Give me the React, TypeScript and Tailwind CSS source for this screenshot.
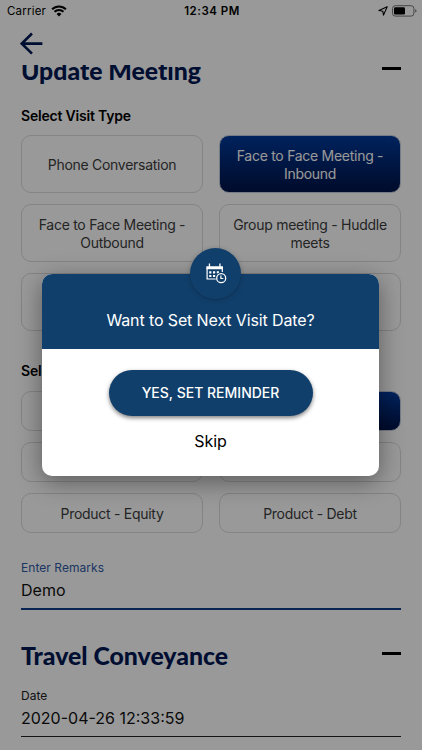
import { ReactNode } from 'react';

interface OptionProps {
    label: string;
    selected?: boolean;
}

interface FieldProps {
    label: string;
    value: string;
    focused?: boolean;
}

const visitTypes: OptionProps[] = [
    { label: 'Phone Conversation' },
    { label: 'Face to Face Meeting - Inbound', selected: true },
    { label: 'Face to Face Meeting - Outbound' },
    { label: 'Group meeting - Huddle meets' },
    { label: 'Joint Visit with Branch Manager' },
    { label: 'Others' },
];

const purposes: OptionProps[] = [
    { label: 'Service' },
    { label: 'Review', selected: true },
    { label: 'Training' },
    { label: 'Product - MF' },
    { label: 'Product - Equity' },
    { label: 'Product - Debt' },
];

function StatusBar() {
    return (
        <div className="grid h-[22px] shrink-0 grid-cols-3 items-center pr-[5px] pl-[7px] text-[11.5px]">
            <div className="flex items-center gap-[5px] pt-px tracking-[0.2px]">
                Carrier
                <svg
                    className="mb-[2px]"
                    width="16"
                    height="12"
                    viewBox="0 0 16 12"
                >
                    <path d="M8 11.4 5.6 8.9a3.4 3.4 0 0 1 4.8 0Z" />
                    <path
                        d="M3.5 6.8a6.4 6.4 0 0 1 9 0M1.1 4.3a9.8 9.8 0 0 1 13.8 0"
                        fill="none"
                        stroke="#000"
                        strokeWidth="2"
                    />
                </svg>
            </div>
            <div className="pt-px text-center font-semibold tracking-[0.5px]">
                12:34 PM
            </div>
            <div className="flex items-center justify-end gap-[4px]">
                <svg width="10" height="10" viewBox="0 0 10 10">
                    <path
                        d="M9.2.8.9 4.5l3.9.7.7 3.9Z"
                        fill="none"
                        stroke="#000"
                        strokeWidth="1.1"
                        strokeLinejoin="round"
                    />
                </svg>
                <svg width="25" height="12" viewBox="0 0 25 12">
                    <rect
                        x=".5"
                        y=".7"
                        width="21.4"
                        height="10.4"
                        rx="2.8"
                        fill="none"
                        stroke="#777"
                    />
                    <rect x="2" y="2.2" width="11" height="7.4" rx="1.4" />
                    <path d="M23.2 4.2v3.4q1.3-.4 1.3-1.7t-1.3-1.7Z" fill="#777" />
                </svg>
            </div>
        </div>
    );
}

function SectionTitle({ children }: { children: ReactNode }) {
    return (
        <div className="flex h-8 items-center justify-between">
            <h2 className="mb-[2px] font-[Lato,sans-serif] text-[24.8px] leading-8 font-black text-[#001854] [font-variant-ligatures:none]">
                {children}
            </h2>
            <span className="mb-[7px] h-[2.5px] w-[19px] bg-black" />
        </div>
    );
}

function Option({ label, selected }: OptionProps) {
    return (
        <button
            className={`flex items-center justify-center rounded-[10px] border px-2 pt-[2px] text-center text-[14px] leading-[18px] tracking-[-0.28px] ${
                selected
                    ? 'border-[#c4cbdc] bg-linear-to-b from-[#003a9c] to-[#001348] text-white'
                    : 'border-[#dcdcdc] text-[#3c3c3c]'
            }`}
        >
            {label}
        </button>
    );
}

function Field({ label, value, focused }: FieldProps) {
    return (
        <div
            className={
                focused
                    ? 'border-b-2 border-[#0f3f8c]'
                    : 'border-b border-[#222]'
            }
        >
            <div
                className={`pt-px text-[12px] leading-4 tracking-[0.05px] ${focused ? 'text-[#2f5ba5]' : 'text-[#222]'}`}
            >
                {label}
            </div>
            <div className="pt-[3px] pb-[7px] text-[16px] leading-[22px] text-[#111]">
                {value}
            </div>
        </div>
    );
}

function ReminderIcon() {
    return (
        <svg width="22" height="22" viewBox="0 0 22 22" fill="#fff">
            <path
                d="M10.8 16H2.1V4h15.2v5"
                fill="none"
                stroke="#fff"
                strokeWidth="1.2"
            />
            <path d="M1.5 3.4h16.4v2.9H1.5ZM3.8.6h1.3v4H3.8ZM14.3.6h1.3v4h-1.3ZM4.2 8.2h2.2v2.2H4.2ZM8 8.2h2.2v2.2H8ZM11.8 8.2H14v1.5l-2.2.7ZM4.2 11.9h2.2v2.2H4.2ZM8 11.9h2.2v2.2H8Z" />
            <circle
                cx="16.2"
                cy="15.2"
                r="4.5"
                fill="#113f6b"
                stroke="#fff"
                strokeWidth="1.3"
            />
            <path
                d="M15.9 12.6v2.9h2.4"
                fill="none"
                stroke="#fff"
                strokeWidth="1.2"
            />
        </svg>
    );
}

function ReminderDialog() {
    return (
        <div className="absolute inset-0 flex items-center justify-center bg-black/40 pr-px">
            <div className="relative h-[202px] w-[337px] rounded-[10px] bg-white shadow-[0_6px_24px_rgba(0,0,0,0.4)]">
                <div className="flex h-[75px] items-center justify-center rounded-t-[10px] bg-[#113f6b] pt-[16px] text-[16px] tracking-[-0.12px] text-white">
                    Want to Set Next Visit Date?
                </div>
                <div className="absolute -top-[26px] left-[148px] flex size-[51px] items-center justify-center rounded-full bg-[#113f6b] shadow-[0_1px_5px_rgba(0,0,0,0.25)]">
                    <ReminderIcon />
                </div>
                <div className="flex flex-col items-center pt-[21px]">
                    <button className="h-[46px] w-[204px] rounded-full bg-[#113f6b] pb-[2px] text-[14px] font-medium text-white shadow-[0_2px_4px_rgba(0,0,0,0.5)]">
                        YES, SET REMINDER
                    </button>
                    <button className="mt-[13px] text-[16px] leading-6 text-black">
                        Skip
                    </button>
                </div>
            </div>
        </div>
    );
}

export default function App() {
    return (
        <div className="relative flex h-[750px] w-[422px] flex-col overflow-hidden bg-white font-[Inter,sans-serif] text-black">
            <StatusBar />
            <div className="flex h-[43px] shrink-0 items-center pl-[20px]">
                <svg
                    width="23"
                    height="24"
                    viewBox="0 0 23 24"
                    fill="none"
                    stroke="#001854"
                    strokeWidth="2.6"
                >
                    <path d="M12 1.5 1.8 11.6 12 21.7M1.8 11.6h20.6" />
                </svg>
            </div>
            <div className="min-h-0 flex-1 overflow-hidden px-[21px]">
                <div className="-mt-[9px]">
                    <SectionTitle>Update Meeting</SectionTitle>
                </div>
                <h3 className="mt-[18px] text-[14px] leading-5 font-semibold tracking-[-0.2px]">
                    Select Visit Type
                </h3>
                <div className="mt-[9px] grid auto-rows-[58px] grid-cols-2 gap-x-[16px] gap-y-[11px]">
                    {visitTypes.map((item) => (
                        <Option key={item.label} {...item} />
                    ))}
                </div>
                <h3 className="mt-[30px] text-[14px] leading-5 font-semibold tracking-[-0.2px]">
                    Select Purpose
                </h3>
                <div className="mt-[10px] mb-[26px] grid auto-rows-[40px] grid-cols-2 gap-x-[16px] gap-y-[11px]">
                    {purposes.map((item) => (
                        <Option key={item.label} {...item} />
                    ))}
                </div>
                <Field label="Enter Remarks" value="Demo" focused />
                <div className="mt-[31px] mb-[14px]">
                    <SectionTitle>Travel Conveyance</SectionTitle>
                </div>
                <Field label="Date" value="2020-04-26 12:33:59" />
            </div>
            <ReminderDialog />
        </div>
    );
}
